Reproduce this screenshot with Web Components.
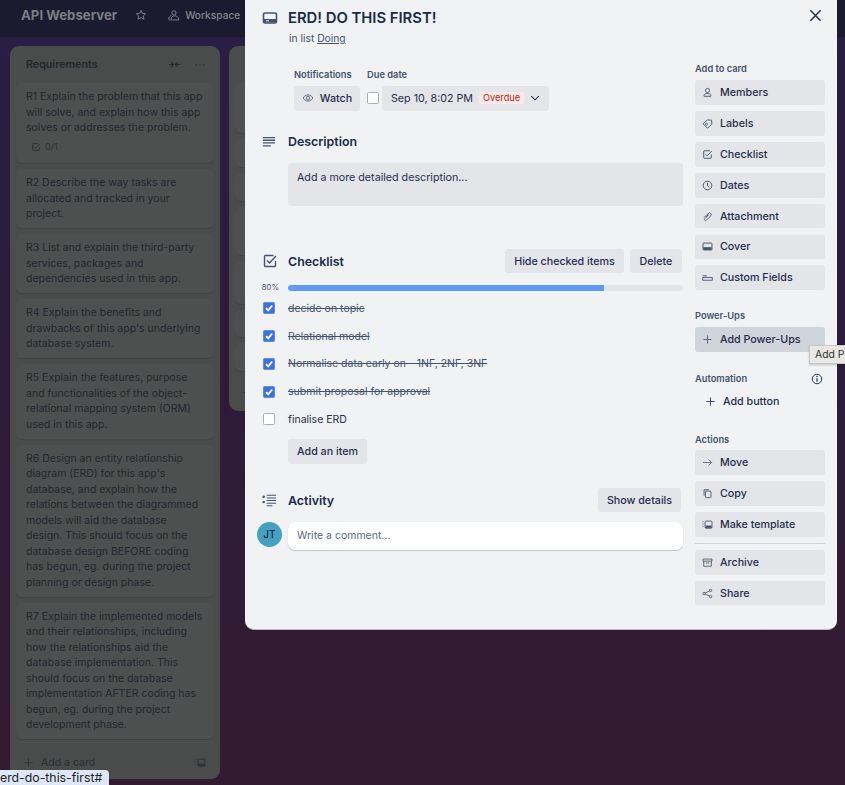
<!DOCTYPE html>
<html>
<head>
<meta charset="utf-8">
<style>
  html, body { margin: 0; height: 100%; overflow: hidden; }
  body { font-family: Inter, "Liberation Sans", sans-serif; background: #2c1c3a; }
</style>
</head>
<body>
<trello-board>
  <board-list name="Requirements">
    <list-card>R1 Explain the problem that this app will solve, and explain how this app solves or addresses the problem.<span slot="badge">0/1</span></list-card>
    <list-card>R2 Describe the way tasks are allocated and tracked in your project.</list-card>
    <list-card>R3 List and explain the third-party services, packages and dependencies used in this app.</list-card>
    <list-card>R4 Explain the benefits and drawbacks of this app's underlying database system.</list-card>
    <list-card>R5 Explain the features, purpose and functionalities of the object-relational mapping system (ORM) used in this app.</list-card>
    <list-card>R6 Design an entity relationship diagram (ERD) for this app's database, and explain how the relations between the diagrammed models will aid the database design. This should focus on the database design BEFORE coding has begun, eg. during the project planning or design phase.</list-card>
    <list-card>R7 Explain the implemented models and their relationships, including how the relationships aid the database implementation. This should focus on the database implementation AFTER coding has begun, eg. during the project development phase.</list-card>
  </board-list>
  <stub-list></stub-list>
</trello-board>
<card-modal></card-modal>
<url-tip>erd-do-this-first#</url-tip>

<script>
const ICONS = {
  card: '<rect x="1.5" y="3" width="13" height="10" rx="1.5" fill="none" stroke="currentColor" stroke-width="1.6"/><path d="M2 9h12v3.5H2z" fill="currentColor"/><path d="M4 10.8h3" stroke="#f1f2f4" stroke-width="1"/>',
  eye: '<path d="M1.5 8C3.2 5.2 5.4 3.9 8 3.9s4.8 1.3 6.5 4.1c-1.7 2.8-3.9 4.1-6.5 4.1S3.2 10.8 1.5 8z" fill="none" stroke="currentColor" stroke-width="1.1"/><circle cx="8" cy="8" r="2.3" fill="none" stroke="currentColor" stroke-width="1.1"/>',
  lines: '<path d="M1 3h14M1 6h14M1 9h14M1 12.5h9" stroke="currentColor" stroke-width="1.5" fill="none"/>',
  check: '<path d="M13.5 8v4.5a1 1 0 0 1-1 1h-9a1 1 0 0 1-1-1v-9a1 1 0 0 1 1-1h8" fill="none" stroke="currentColor" stroke-width="1.4"/><path d="M5 7.5l2.5 2.5 6.5-7" fill="none" stroke="currentColor" stroke-width="1.4"/>',
  activity: '<circle cx="1.8" cy="4" r="1.3" fill="currentColor"/><circle cx="1.8" cy="9.5" r="1.3" fill="currentColor"/><path d="M5 2.5h10M5 5.3h10M5 8.1h10M5 10.9h10M5 13.5h6" stroke="currentColor" stroke-width="1.1" fill="none"/>',
  user: '<circle cx="8" cy="5" r="3" fill="none" stroke="currentColor" stroke-width="1.3"/><path d="M3 13.5v-1.3c0-1.5 1.4-2.6 3-2.6h4c1.6 0 3 1.1 3 2.6v1.3z" fill="none" stroke="currentColor" stroke-width="1.3"/>',
  label: '<path d="M1.5 8.5L7.5 2.800l6.5.3.3 6-5.800 5.400h-1z" fill="none" stroke="currentColor" stroke-width="1.3"/><circle cx="6.5" cy="9" r="1.5" fill="none" stroke="currentColor" stroke-width="1.2"/>',
  clock: '<circle cx="8" cy="8" r="6.3" fill="none" stroke="currentColor" stroke-width="1.4"/><path d="M8 4v4.3l2.7 1.7" fill="none" stroke="currentColor" stroke-width="1.4"/>',
  clip: '<path d="M3 9.5l6-6a2.6 2.6 0 0 1 3.7 3.7l-6.3 6.3a1.6 1.6 0 0 1-2.3-2.3l6-6M5.8 8.8l3.5-3.5" fill="none" stroke="currentColor" stroke-width="1.3"/>',
  cover: '<rect x="1.5" y="3" width="13" height="10" rx="1" fill="none" stroke="currentColor" stroke-width="1.4"/><path d="M2 9h12v4H2z" fill="currentColor"/>',
  fields: '<path d="M1 5.5h6M1 8h14v4H1z" fill="none" stroke="currentColor" stroke-width="1.3"/>',
  plus: '<path d="M8 2v12M2 8h12" stroke="currentColor" stroke-width="1.2" fill="none"/>',
  arrow: '<path d="M1.5 8h12.5M9.5 3.5L14 8l-4.500 4.500" stroke="currentColor" stroke-width="1.1" fill="none"/>',
  copy: '<rect x="5" y="4.5" width="8" height="9.5" rx="1" fill="none" stroke="currentColor" stroke-width="1.3"/><path d="M3 11V2.5h7" fill="none" stroke="currentColor" stroke-width="1.3"/>',
  template: '<rect x="4.5" y="3" width="10" height="10.5" rx="1.5" fill="none" stroke="currentColor" stroke-width="1.3"/><path d="M5 9.5h9V13H5z" fill="currentColor"/><path d="M1.5 3v1.5M1.5 6.5V8M1.5 10v1.5" stroke="currentColor" stroke-width="1.3"/>',
  archive: '<path d="M1.5 3h13v3h-13zM2.5 6v7.5h11V6M5.500 8.800h5" fill="none" stroke="currentColor" stroke-width="1.2"/>',
  share: '<circle cx="12.5" cy="3.5" r="1.7" fill="none" stroke="currentColor" stroke-width="1.2"/><circle cx="12.5" cy="12.5" r="1.7" fill="none" stroke="currentColor" stroke-width="1.2"/><circle cx="3" cy="8" r="1.7" fill="none" stroke="currentColor" stroke-width="1.2"/><path d="M4.5 7.2L11 4.3M4.5 8.8l6.5 2.9" stroke="currentColor" stroke-width="1.2" fill="none"/>',
  close: '<path d="M2.5 2.5l11 11M13.5 2.5l-11 11" stroke="currentColor" stroke-width="1.5" fill="none"/>',
  chevron: '<path d="M3 5.5l5 5 5-5" stroke="currentColor" stroke-width="1.4" fill="none"/>',
  info: '<circle cx="8" cy="8" r="6.3" fill="none" stroke="currentColor" stroke-width="1.3"/><path d="M8 7v4.5" stroke="currentColor" stroke-width="1.6"/><circle cx="8" cy="4.8" r="1" fill="currentColor"/>',
  star: '<path d="M8 1.8l1.9 4 4.3.5-3.2 3 .9 4.3L8 11.500l-3.900 2.100.9-4.300-3.200-3 4.300-.5z" fill="none" stroke="currentColor" stroke-width="1.2"/>',
  people: '<circle cx="8.5" cy="4.8" r="2.6" fill="none" stroke="currentColor" stroke-width="1.1"/><path d="M5.5 13.5h9l-.5-2.500-2.500-2.500h-4L5 11zM5 7.500L2 11l.5 2.500h2" fill="none" stroke="currentColor" stroke-width="1.1"/>',
  collapse: '<path d="M1 8h5.5M4 5l3 3-3 3M15 8H9.500M12 5L9 8l3 3" stroke="currentColor" stroke-width="1.3" fill="none"/>',
  dots: '<circle cx="3" cy="8" r="1.1" fill="currentColor"/><circle cx="8" cy="8" r="1.1" fill="currentColor"/><circle cx="13" cy="8" r="1.1" fill="currentColor"/>'
};

function icon(name, size) {
  return `<svg width="${size}" height="${size}" viewBox="0 0 16 16" aria-hidden="true">${ICONS[name]}</svg>`;
}

class TrelloBoard extends HTMLElement {
  connectedCallback() {
    const root = this.attachShadow({ mode: 'open' });
    root.innerHTML = `
      <style>
        :host { display: flex; flex-direction: column; height: 785px; overflow: hidden;
          background: linear-gradient(180deg, #291e45 0%, #2c1c3a 45%, #331b30 100%); }
        header { flex: none; height: 37px; background: #1c1a2e; display: flex; align-items: center;
          padding: 0 0 7px 21px; box-sizing: border-box; color: #85868c; white-space: nowrap; }
        h1 { margin: 0; font-size: 13.2px; font-weight: 700; color: #7d7e84; }
        .star { margin-left: 18px; display: flex; }
        .ws { margin-left: 20px; display: flex; align-items: center; gap: 5px; font-size: 10.2px; font-weight: 500; }
        .lists { display: flex; align-items: flex-start; gap: 9px; padding: 9px 0 0 10px; }
      </style>
      <header><h1>API Webserver</h1><span class="star">${icon('star', 12)}</span>
        <span class="ws">${icon('people', 13)}Workspace</span></header>
      <div class="lists"><slot></slot></div>`;
  }
}

class BoardList extends HTMLElement {
  connectedCallback() {
    const root = this.attachShadow({ mode: 'open' });
    root.innerHTML = `
      <style>
        :host { display: block; width: 210px; flex: none; background: #4a4b4b; border-radius: 9px;
          padding: 0 6px; box-sizing: border-box; color: #24272e; height: 733px; }
        .head { height: 37px; display: flex; align-items: center; padding: 0 8px 0 10px;
          font-size: 10.7px; font-weight: 600; }
        .head span { flex: 1; }
        .head svg { color: #26292f; }
        .head svg + svg { margin-left: 13px; color: #2e3138; }
        .cards { display: flex; flex-direction: column; gap: 6px; }
        .foot { margin-top: 3px; border-top: 1px solid #4e4f4f; height: 38px; display: flex; align-items: center;
          padding: 0 8px 0 7px; font-size: 10.5px; color: #2b2e35; gap: 7px; }
        .foot span { flex: 1; }
      </style>
      <div class="head"><span>${this.getAttribute('name')}</span>${icon('collapse', 13)}${icon('dots', 12)}</div>
      <div class="cards"><slot></slot></div>
      <div class="foot">${icon('plus', 11)}<span>Add a card</span>${icon('template', 11)}</div>`;
  }
}

class ListCard extends HTMLElement {
  connectedCallback() {
    const root = this.attachShadow({ mode: 'open' });
    root.innerHTML = `
      <style>
        :host { display: block; background: #4e4f4f; border-radius: 6px; padding: 6px 10px 6.5px;
          font-size: 10.5px; line-height: 15.5px; color: #24272e; box-shadow: 0 1px 0 #434445; }
        .badge { display: none; align-items: center; gap: 4px; font-size: 9px; line-height: 16px; margin: 3px 0 2px 5px; color: #2e3138; }
        .badge.on { display: flex; }
      </style>
      <slot></slot>
      <div class="badge">${icon('check', 10)}<slot name="badge"></slot></div>`;
    if (this.querySelector('[slot=badge]')) root.querySelector('.badge').classList.add('on');
  }
}

class StubList extends HTMLElement {
  connectedCallback() {
    const root = this.attachShadow({ mode: 'open' });
    const heights = [50, 28, 28, 48, 43, 27, 28];
    root.innerHTML = `
      <style>
        :host { display: flex; flex-direction: column; gap: 6px; width: 210px; flex: none; background: #4a4b4b;
          border-radius: 9px; height: 365px; padding: 37px 6px 0; box-sizing: border-box; color: #2b2e35; }
        i { display: block; background: #4e4f4f; border-radius: 6px; box-shadow: 0 1px 0 #434445; }
        svg { margin: 10px 0 0 7px; }
      </style>
      ${heights.map(h => `<i style="height:${h}px"></i>`).join('')}${icon('plus', 11)}`;
  }
}

class SideButton extends HTMLElement {
  connectedCallback() {
    const root = this.attachShadow({ mode: 'open' });
    root.innerHTML = `
      <style>
        :host { display: flex; align-items: center; height: 24.6px; padding-left: 7px; border-radius: 3px;
          background: #e4e5e9; color: #1f2e4d; font-size: 10.7px; font-weight: 500; gap: 7px; white-space: nowrap; }
        :host([active]) { background: #d0d4db; }
        :host([plain]) { background: none; padding-left: 10px; gap: 7px; }
        svg { flex: none; color: #44546f; }
        :host([plain]) svg { color: #1f2e4d; }
      </style>
      ${icon(this.getAttribute('icon'), 11)}<slot></slot>`;
  }
}

class PlainButton extends HTMLElement {
  connectedCallback() {
    const root = this.attachShadow({ mode: 'open' });
    root.innerHTML = `
      <style>
        :host { display: inline-flex; align-items: center; justify-content: center; gap: 6px; height: 24.6px;
          border-radius: 3px; background: #e4e5e9; color: #1f2e4d; font-size: 10.7px; font-weight: 500;
          box-sizing: border-box; white-space: nowrap; flex: none; }
      </style><slot></slot>`;
  }
}

class CheckItem extends HTMLElement {
  connectedCallback() {
    const root = this.attachShadow({ mode: 'open' });
    const done = this.hasAttribute('done');
    root.innerHTML = `
      <style>
        :host { display: flex; align-items: center; height: 27.7px; font-size: 10.5px; color: #1f2e4d; }
        .box { width: 12px; height: 12px; margin-left: 18px; flex: none; box-sizing: border-box; border-radius: 1.5px;
          background: #fff; border: 1px solid #a9afba; display: flex; }
        .box.done { background: #3a72e0; border-color: #5f8de6; }
        .txt { margin-left: 13px; }
        .txt.done { text-decoration: line-through; color: #44546f; }
      </style>
      <span class="box ${done ? 'done' : ''}">${done ? '<svg width="10" height="10" viewBox="0 0 10 10"><path d="M2 5.2l2.2 2.2L8.2 2.5" stroke="#fff" stroke-width="1.8" fill="none"/></svg>' : ''}</span>
      <span class="txt ${done ? 'done' : ''}"><slot></slot></span>`;
  }
}

class CardModal extends HTMLElement {
  connectedCallback() {
    const root = this.attachShadow({ mode: 'open' });
    root.innerHTML = `
      <style>
        :host { display: flex; position: absolute; left: 245px; top: 0; width: 592px; height: 630px;
          background: #f1f2f4; border-radius: 0 0 9px 9px; box-sizing: border-box; color: #1f2e4d;
          font-size: 10.7px; border-bottom: 1px solid #b9bcc1; }
        .close { position: absolute; right: 14px; top: 8px; width: 15px; height: 15px; }
        .main { width: 438px; flex: none; }
        .side { width: 130px; margin-left: 12px; flex: none; padding-top: 63.4px; }
        .row { display: flex; align-items: center; }
        .ic { width: 43px; flex: none; padding-left: 17px; box-sizing: border-box; display: flex; color: #44546f; }
        h2 { margin: 0; font-size: 14.8px; font-weight: 600; color: #172b4d; line-height: 20px; }
        h3 { margin: 0; font-size: 12.4px; font-weight: 600; color: #172b4d; flex: 1; }
        .sub { margin: 3px 0 0 44px; color: #44546f; font-size: 10.3px; line-height: 14px; }
        .title { padding-top: 8px; }
        .meta { display: flex; margin: 24px 0 0 49px; gap: 7px; }
        .lab { font-size: 9.3px; font-weight: 600; color: #44546f; line-height: 12px; margin-bottom: 5px; }
        .watch { width: 66px; }
        .watch svg { color: #44546f; }
        .due { display: flex; align-items: center; gap: 3px; }
        .cb { width: 12px; height: 12px; box-sizing: border-box; background: #fff; border: 1px solid #a9afba; border-radius: 1.5px; }
        .date { display: flex; align-items: center; width: 167px; height: 24.6px; background: #e4e5e9; border-radius: 3px;
          padding-left: 9px; box-sizing: border-box; }
        .over { background: #ffe9e6; color: #ae2a19; font-size: 9.2px; padding: 1px 4px; border-radius: 2px; margin-left: 6px; line-height: 10px; }
        .date svg { margin-left: 5px; }
        .desc-h { margin-top: 21px; height: 20px; }
        .desc { margin: 11px 0 0 43px; width: 395px; height: 43px; background: #e4e5e9; border-radius: 3px;
          padding: 8px 9px; box-sizing: border-box; line-height: 14px; }
        .check-h { margin-top: 43px; height: 25px; padding-right: 1px; }
        .check-h plain-button + plain-button { margin-left: 6px; }
        .bar { display: flex; align-items: center; margin-top: 8px; height: 12px; }
        .pct { width: 34px; text-align: right; font-size: 7.7px; color: #44546f; padding-right: 9px; flex: none; }
        .track { width: 395px; height: 6px; background: #e4e5e9; border-radius: 3px; overflow: hidden; }
        .fill { width: 316px; height: 6px; background: #5e9bf6; }
        .items { margin-top: 1px; }
        .add { margin: 6px 0 0 43px; width: 79px; display: flex; }
        .act-h { margin-top: 24px; height: 25px; padding-right: 2px; }
        .comment { display: flex; margin-top: 9px; align-items: flex-start; }
        .av { width: 25px; height: 25px; border-radius: 50%; background: #45a1bf; margin-left: 12px; color: #172b4d;
          font-size: 10px; font-weight: 500; display: flex; align-items: center; justify-content: center; flex: none; }
        .in { margin-left: 6px; width: 395px; height: 28px; box-sizing: border-box; background: #fff; border-radius: 7px;
          box-shadow: 0 1px 1px #c3c6cf, 0 0 1px #d5d7dc; display: flex; align-items: center; padding-left: 9px;
          color: #5b6a84; font-size: 10.5px; }
        .s-lab { font-size: 9.3px; font-weight: 600; color: #44546f; line-height: 12px; margin-bottom: 5px;
          display: flex; justify-content: space-between; align-items: center; }
        .s-lab svg { color: #1f2e4d; margin-right: 2px; }
        .stack { display: flex; flex-direction: column; gap: 6.25px; }
        .power { margin-top: 20px; }
        .auto { margin-top: 21px; }
        .actions { margin-top: 20px; }
        .actions .s-lab { margin-bottom: 4px; }
        hr { border: 0; height: 1px; background: #d2d5dc; margin: 0; }
      </style>
      <span class="close">${icon('close', 15)}</span>
      <div class="main">
        <div class="title">
          <div class="row"><span class="ic">${icon('card', 16)}</span><h2>ERD! DO THIS FIRST!</h2></div>
          <div class="sub">in list <u>Doing</u></div>
        </div>
        <div class="meta">
          <div><div class="lab">Notifications</div><plain-button class="watch">${icon('eye', 12)}<span>Watch</span></plain-button></div>
          <div><div class="lab">Due date</div>
            <div class="due"><span class="cb"></span><div class="date">Sep 10, 8:02 PM<span class="over">Overdue</span>${icon('chevron', 12)}</div></div></div>
        </div>
        <div class="row desc-h"><span class="ic">${icon('lines', 14)}</span><h3>Description</h3></div>
        <div class="desc">Add a more detailed description...</div>
        <div class="row check-h"><span class="ic">${icon('check', 16)}</span><h3>Checklist</h3>
          <plain-button style="width:119px">Hide checked items</plain-button><plain-button style="width:52px">Delete</plain-button></div>
        <div class="bar"><span class="pct">80%</span><div class="track"><div class="fill"></div></div></div>
        <div class="items">
          <check-item done>decide on topic</check-item>
          <check-item done>Relational model</check-item>
          <check-item done>Normalise data early on - 1NF, 2NF, 3NF</check-item>
          <check-item done>submit proposal for approval</check-item>
          <check-item>finalise ERD</check-item>
        </div>
        <plain-button class="add">Add an item</plain-button>
        <div class="row act-h"><span class="ic">${icon('activity', 15)}</span><h3>Activity</h3><plain-button style="width:83px">Show details</plain-button></div>
        <div class="comment"><span class="av">JT</span><div class="in">Write a comment...</div></div>
      </div>
      <div class="side">
        <div class="s-lab">Add to card</div>
        <div class="stack">
          <side-button icon="user">Members</side-button>
          <side-button icon="label">Labels</side-button>
          <side-button icon="check">Checklist</side-button>
          <side-button icon="clock">Dates</side-button>
          <side-button icon="clip">Attachment</side-button>
          <side-button icon="cover">Cover</side-button>
          <side-button icon="fields">Custom Fields</side-button>
        </div>
        <div class="power"><div class="s-lab">Power-Ups</div><side-button icon="plus" active>Add Power-Ups</side-button></div>
        <div class="auto"><div class="s-lab">Automation ${icon('info', 12)}</div><side-button icon="plus" plain>Add button</side-button></div>
        <div class="actions"><div class="s-lab">Actions</div>
          <div class="stack">
            <side-button icon="arrow">Move</side-button>
            <side-button icon="copy">Copy</side-button>
            <side-button icon="template">Make template</side-button>
            <hr>
            <side-button icon="archive">Archive</side-button>
            <side-button icon="share">Share</side-button>
          </div>
        </div>
      </div>
      <power-tip>Add P</power-tip>`;
  }
}

class PowerTip extends HTMLElement {
  connectedCallback() {
    this.attachShadow({ mode: 'open' }).innerHTML = `
      <style>
        :host { display: block; position: absolute; left: 564px; top: 345px; width: 36px; height: 19px; box-sizing: border-box;
          background: #e9e8e4; border: 1px solid #c9c9c6; border-right: 0; color: #333; font-size: 10.4px; line-height: 17px; padding-left: 5px;
          white-space: nowrap; box-shadow: 0 1px 2px rgba(0,0,0,.2); }
      </style><slot></slot>`;
  }
}

class UrlTip extends HTMLElement {
  connectedCallback() {
    this.attachShadow({ mode: 'open' }).innerHTML = `
      <style>
        :host { display: block; position: absolute; left: 0; bottom: 0; height: 15px; width: 109px; box-sizing: border-box;
          background: #dde7f7; border-radius: 0 4px 0 0; color: #222; font-size: 12.3px; line-height: 15px;
          white-space: nowrap; }
      </style><slot></slot>`;
  }
}

customElements.define('trello-board', TrelloBoard);
customElements.define('board-list', BoardList);
customElements.define('list-card', ListCard);
customElements.define('stub-list', StubList);
customElements.define('side-button', SideButton);
customElements.define('plain-button', PlainButton);
customElements.define('check-item', CheckItem);
customElements.define('power-tip', PowerTip);
customElements.define('url-tip', UrlTip);
customElements.define('card-modal', CardModal);
</script>
</body>
</html>
